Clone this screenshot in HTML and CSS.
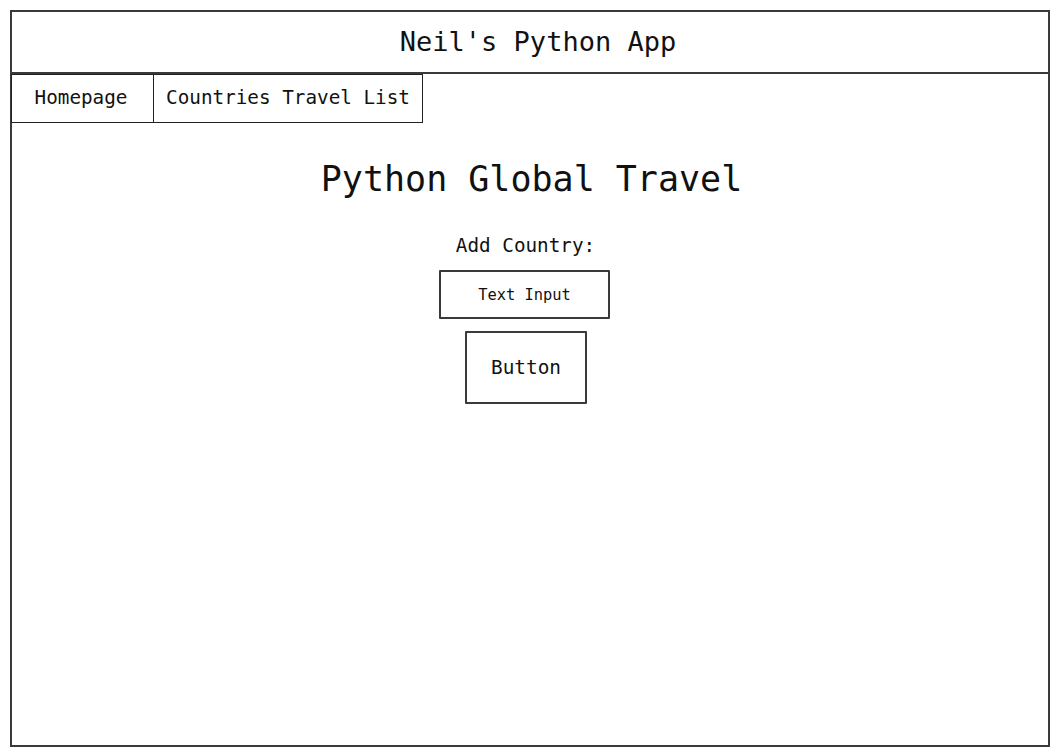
FILE: index.html
```html
<!DOCTYPE html>
<html>
<head>
<meta charset="utf-8">
<title>Neil's Python App</title>
<link rel="stylesheet" href="styles.css">
</head>
<body>
<div class="frame">
  <header class="app-header">Neil's Python App</header>
  <nav class="nav">
    <div class="nav-item nav-home">Homepage</div>
    <div class="nav-item nav-list">Countries Travel List</div>
  </nav>
  <main class="main">
    <h1 class="title">Python Global Travel</h1>
    <div class="form">
      <div class="label">Add Country:</div>
      <div class="text-input">Text Input</div>
      <div class="button">Button</div>
    </div>
  </main>
</div>
</body>
</html>
```
FILE: styles.css
```css
* { box-sizing: border-box; }
html, body { margin: 0; padding: 0; background: #fff; }
body {
  font-family: "DejaVu Sans Mono", "Liberation Mono", monospace;
  color: #111;
}
.frame {
  margin: 10px;
  width: 1040px;
  height: 737px;
  border: 2px solid #3a3a3a;
  display: flex;
  flex-direction: column;
}
.app-header {
  height: 62px;
  border-bottom: 2px solid #3a3a3a;
  display: flex;
  align-items: center;
  justify-content: center;
  padding-left: 16px;
  padding-bottom: 2px;
  font-size: 27px;
}
.nav {
  display: flex;
  height: 49px;
}
.nav-item {
  border: 1px solid #222;
  display: flex;
  align-items: center;
  justify-content: center;
  padding-bottom: 2px;
  font-size: 19.3px;
}
.nav-home { width: 143px; margin-left: -1px; padding-right: 3px; }
.nav-list { width: 270px; margin-left: -1px; }
.main {
  display: flex;
  flex-direction: column;
  align-items: center;
}
.title {
  margin: 36px 0 0 0;
  font-weight: normal;
  font-size: 35px;
  line-height: 40px;
  padding-left: 3px;
}
.form {
  margin-top: 35px;
  display: flex;
  flex-direction: column;
  align-items: center;
  padding-right: 10px;
}
.label {
  font-size: 19.3px;
  line-height: 24px;
  padding-left: 1px;
}
.text-input {
  margin-top: 12px;
  margin-right: 1px;
  width: 171px;
  height: 49px;
  border: 2px solid #3a3a3a;
  border-radius: 1px;
  display: flex;
  align-items: center;
  justify-content: center;
  font-size: 15.4px;
}
.button {
  margin-top: 12px;
  width: 122px;
  height: 73px;
  border: 2px solid #3a3a3a;
  border-radius: 1px;
  display: flex;
  align-items: center;
  justify-content: center;
  padding-bottom: 1px;
  font-size: 19.4px;
  margin-left: 2px;
}
```
